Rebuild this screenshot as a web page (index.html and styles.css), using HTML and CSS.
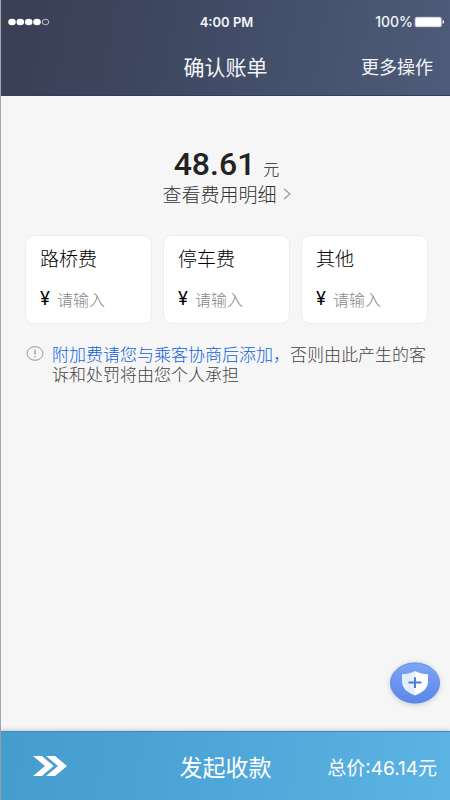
FILE: index.html
```html
<!DOCTYPE html>
<html lang="zh-CN">
<head>
<meta charset="utf-8">
<meta name="viewport" content="width=device-width, initial-scale=1">
<title>确认账单</title>
<link rel="stylesheet" href="styles.css">
</head>
<body>
<div class="app">
  <header class="header">
    <div class="status">
      <svg class="signal" width="42" height="8" viewBox="0 0 42 8" aria-hidden="true">
        <g fill="#fff"><ellipse cx="4" cy="4" rx="3.8" ry="3.2"/><ellipse cx="12.3" cy="4" rx="3.8" ry="3.2"/><ellipse cx="20.7" cy="4" rx="3.8" ry="3.2"/><ellipse cx="29" cy="4" rx="3.8" ry="3.2"/></g>
        <ellipse cx="37.5" cy="4" rx="3.3" ry="2.7" fill="none" stroke="#e4e7ee" stroke-width=".8"/>
      </svg>
      <span class="time">4:00 PM</span>
      <span class="battery">100%
        <svg width="31" height="12" viewBox="0 0 31 12" aria-hidden="true">
          <rect x=".5" y=".7" width="27.5" height="10.6" rx="2" fill="#9fa8bc"/>
          <rect x="1.5" y="1.6" width="25.5" height="8.8" rx="1.5" fill="#fff"/>
          <path d="M28.6 3.8q3 2.2 0 4.4z" fill="#fff"/>
        </svg>
      </span>
    </div>
    <div class="nav">
      <h1 class="title">确认账单</h1>
      <button class="more" type="button">更多操作</button>
    </div>
  </header>

  <main class="main">
    <section class="bill">
      <p class="amount"><strong class="number">48.61</strong><span class="unit">元</span></p>
      <a class="detail" href="#">查看费用明细
        <svg width="8" height="12" viewBox="0 0 8 12" aria-hidden="true"><path d="M1 1l6 5-6 5" fill="none" stroke="#999" stroke-width="1.2"/></svg>
      </a>
    </section>

    <form class="fees" id="fees">
      <label class="fee"><span class="name">路桥费</span><span class="entry"><span class="yen">¥</span><input class="input" type="text" inputmode="decimal" placeholder="请输入"></span></label>
      <label class="fee"><span class="name">停车费</span><span class="entry"><span class="yen">¥</span><input class="input" type="text" inputmode="decimal" placeholder="请输入"></span></label>
      <label class="fee"><span class="name">其他</span><span class="entry"><span class="yen">¥</span><input class="input" type="text" inputmode="decimal" placeholder="请输入"></span></label>
    </form>

    <div class="notice">
      <svg class="info" width="18" height="16" viewBox="0 0 18 16" aria-hidden="true">
        <ellipse cx="9" cy="7.5" rx="8" ry="6.8" fill="none" stroke="#999"/>
        <path d="M9 3.500v5M9 10v1.300" stroke="#999" stroke-width="1.3"/>
      </svg>
      <p class="message"><span class="key">附加费请您与乘客协商后添加，</span>否则由此产生的客诉和处罚将由您个人承担</p>
    </div>
  </main>

  <button class="safety" type="button" aria-label="安全中心">
    <svg width="50" height="42" viewBox="0 0 50 42" aria-hidden="true">
      <defs><linearGradient id="blue" x1="0" y1="0" x2="0" y2="1"><stop offset="0" stop-color="#7ca5f5"/><stop offset="1" stop-color="#5b86e8"/></linearGradient></defs>
      <ellipse cx="25" cy="21" rx="24.6" ry="20.2" fill="url(#blue)" stroke="#5985dc" stroke-width=".8"/>
      <path d="M25 9Q30 12 38 12.200V20Q38 28.500 25 33.500z" fill="#fff"/>
      <path d="M25 9Q20 12 12 12.200V20Q12 28.500 25 33.500z" fill="#e3eeff"/>
      <path d="M18.500 20.500h13M25 15.300v10.600" stroke="#4e7fd0" stroke-width="2"/>
    </svg>
  </button>

  <footer class="footer">
    <button class="collect" type="submit" form="fees">
      <svg class="arrows" width="34" height="20" viewBox="0 0 34 20" aria-hidden="true"><path d="M0 0h9l12 10L9 20H0l12-10zM13 0h9l12 10-12 10h-9l12-10z" fill="#fff"/><path d="M10.500 0l12 10-12 10" fill="none" stroke="#4aa1d2" stroke-width="2"/></svg>
      <span class="action">发起收款</span>
      <span class="total">总价:46.14元</span>
    </button>
  </footer>
</div>
</body>
</html>
```

FILE: styles.css
```css
* {
  box-sizing: border-box;
}

body {
  margin: 0;
  font-family: "Noto Sans CJK SC", sans-serif;
  color: #222;
  background: #f6f6f6;
}

h1,
p {
  margin: 0;
  font-weight: 400;
}

button,
input {
  padding: 0;
  border: 0;
  background: none;
  font: inherit;
  color: inherit;
}

button {
  cursor: pointer;
}

.app {
  display: flex;
  flex-direction: column;
  min-height: 100vh;
  border-left: 1px solid #a5a6a9;
}

.header {
  color: #f3f5fa;
  background: linear-gradient(100deg, #393f54, #3e4760 35%, #4e5c79);
  border-bottom: 1px solid #343e5c;
}

.status {
  display: grid;
  grid-template-columns: 1fr auto 1fr;
  align-items: center;
  height: 43px;
  padding: 0 5px 0 7px;
  font-family: Inter, sans-serif;
  font-size: 13px;
}

.time {
  font-weight: 600;
}

.battery {
  display: flex;
  justify-content: flex-end;
  align-items: center;
  gap: 1px;
  font-size: 14px;
  font-weight: 500;
}

.nav {
  display: grid;
  grid-template-columns: 1fr auto 1fr;
  align-items: center;
  height: 52px;
  padding: 0 17px 6px;
}

.title {
  grid-column: 2;
  font-size: 21px;
  line-height: 28px;
}

.more {
  justify-self: end;
  font-size: 18px;
  line-height: 24px;
}

.main {
  flex: 1;
  padding: 52px 22px 24px 24px;
}

.bill {
  display: flex;
  flex-direction: column;
  align-items: center;
}

.amount {
  display: flex;
  align-items: baseline;
  gap: 8px;
  line-height: 32px;
}

.number {
  font-family: Roboto, sans-serif;
  font-size: 32px;
  font-weight: 500;
}

.unit {
  font-size: 16px;
  font-weight: 300;
}

.detail {
  display: flex;
  align-items: center;
  gap: 6px;
  font-size: 19px;
  font-weight: 300;
  line-height: 20px;
  color: #333;
  text-decoration: none;
}

.fees {
  display: grid;
  grid-template-columns: repeat(3, 1fr);
  gap: 11px;
  margin-top: 31px;
}

.fee {
  display: flex;
  flex-direction: column;
  gap: 19px;
  min-width: 0;
  padding: 11px 14px 13px;
  border: 1px solid #ededed;
  border-radius: 9px;
  background: #fff;
}

.name {
  font-size: 19px;
  font-weight: 300;
  line-height: 22px;
  color: #000;
}

.entry {
  display: flex;
  align-items: center;
  gap: 5px;
  line-height: 22px;
}

.yen {
  width: 12px;
  font-family: Inter, sans-serif;
  font-size: 18px;
  color: #000;
}

.input {
  flex: 1;
  min-width: 0;
  height: 22px;
  font-size: 16px;
  font-weight: 300;
}

.input::placeholder {
  color: #888;
  opacity: 1;
}

.notice {
  display: flex;
  align-items: flex-start;
  gap: 8px;
  margin-top: 22px;
  padding-left: 1px;
}

.info {
  flex: none;
}

.message {
  font-family: "Liberation Sans", "Noto Sans CJK SC", sans-serif;
  font-size: 17px;
  font-weight: 300;
  line-height: 20px;
  color: #444;
}

.key {
  color: #0f5fe0;
}

.safety {
  position: fixed;
  right: 10px;
  bottom: 96px;
  border-radius: 50%;
  box-shadow: 0 1px 5px rgba(50, 80, 140, 0.25);
}

.safety svg {
  display: block;
}

.footer {
  border-top: 1px solid #4389ae;
  background: linear-gradient(100deg, #449dcd, #4fa6d8 50%, #5cb4e4);
  box-shadow: 0 -1px 4px rgba(60, 60, 100, 0.25);
}

.collect {
  display: grid;
  grid-template-columns: 1fr auto 1fr;
  align-items: center;
  width: 100%;
  height: 68px;
  padding: 0 13px;
  color: #fff;
}

.arrows {
  margin-left: 19px;
}

.action {
  font-size: 23px;
  line-height: 30px;
}

.total {
  justify-self: end;
  font-family: Inter, "Noto Sans CJK SC", sans-serif;
  font-size: 19px;
}
```
